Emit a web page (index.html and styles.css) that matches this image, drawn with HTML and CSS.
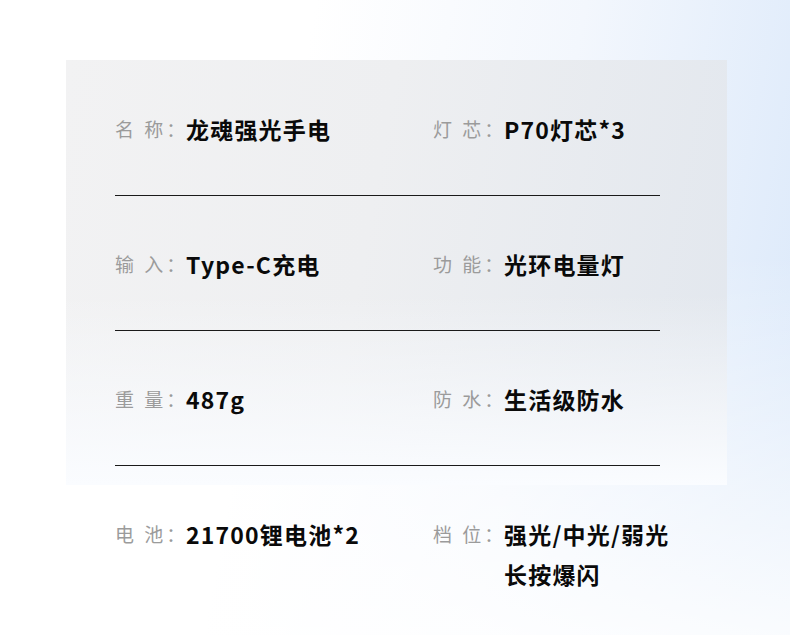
FILE: index.html
```html
<!DOCTYPE html>
<html lang="zh-CN">
<head>
    <meta charset="UTF-8">
    <meta name="viewport" content="width=device-width, initial-scale=1.0">
    <title>龙魂强光手电 参数</title>
    <link rel="stylesheet" href="styles.css">
</head>
<body>
    <div class="specs">
        <div class="spec-row">
            <div class="spec">
                <span class="spec-label">名&nbsp;称：</span>
                <span class="spec-value">龙魂强光手电</span>
            </div>
            <div class="spec">
                <span class="spec-label">灯&nbsp;芯：</span>
                <span class="spec-value">P70灯芯*3</span>
            </div>
        </div>
        <hr class="divider">
        <div class="spec-row">
            <div class="spec">
                <span class="spec-label">输&nbsp;入：</span>
                <span class="spec-value">Type-C充电</span>
            </div>
            <div class="spec">
                <span class="spec-label">功&nbsp;能：</span>
                <span class="spec-value">光环电量灯</span>
            </div>
        </div>
        <hr class="divider">
        <div class="spec-row">
            <div class="spec">
                <span class="spec-label">重&nbsp;量：</span>
                <span class="spec-value">487g</span>
            </div>
            <div class="spec">
                <span class="spec-label">防&nbsp;水：</span>
                <span class="spec-value">生活级防水</span>
            </div>
        </div>
        <hr class="divider">
        <div class="spec-row">
            <div class="spec">
                <span class="spec-label">电&nbsp;池：</span>
                <span class="spec-value">21700锂电池*2</span>
            </div>
            <div class="spec">
                <span class="spec-label">档&nbsp;位：</span>
                <span class="spec-value">强光/中光/弱光<br>长按爆闪</span>
            </div>
        </div>
    </div>
</body>
</html>
```

FILE: styles.css
```css
:root {
    --label-color: #9b9b9b;
    --value-color: #0a0a0a;
    --line-color: #1a1a1a;
}

html, body {
    height: 100%;
}

body {
    margin: 0;
    font-family: "Noto Sans CJK SC", "Noto Sans", sans-serif;
    /* grey card behind the specs, then the page wash */
    background:
        linear-gradient(to bottom, rgba(250,252,255,0) 55%, #fafcff 100%) 66px 60px / 661px 425px no-repeat,
        linear-gradient(100deg, #f2f2f3 0%, #eeeff1 45%, #e2e7ee 100%) 66px 60px / 661px 425px no-repeat,
        linear-gradient(to bottom, rgba(255,255,255,0) 40%, rgba(255,255,255,0.85) 100%),
        linear-gradient(100deg, #ffffff 35%, #f3f7fd 65%, #dae8fa 100%);
}

.specs {
    padding: 109px 0 0 115px;
    width: 545px;
}

.spec-row {
    display: grid;
    grid-template-columns: 318px 1fr;
}

.spec {
    display: flex;
    align-items: flex-start;
    line-height: 40px;
    white-space: nowrap;
}

.spec-label {
    width: 71px;
    flex-shrink: 0;
    font-size: 19px;
    letter-spacing: 3px;
    color: var(--label-color);
}

.spec-value {
    font-size: 23px;
    font-weight: 700;
    letter-spacing: 1.2px;
    color: var(--value-color);
}

.divider {
    border: none;
    border-top: 1px solid var(--line-color);
    margin: 46px 0 48px;
}
```
